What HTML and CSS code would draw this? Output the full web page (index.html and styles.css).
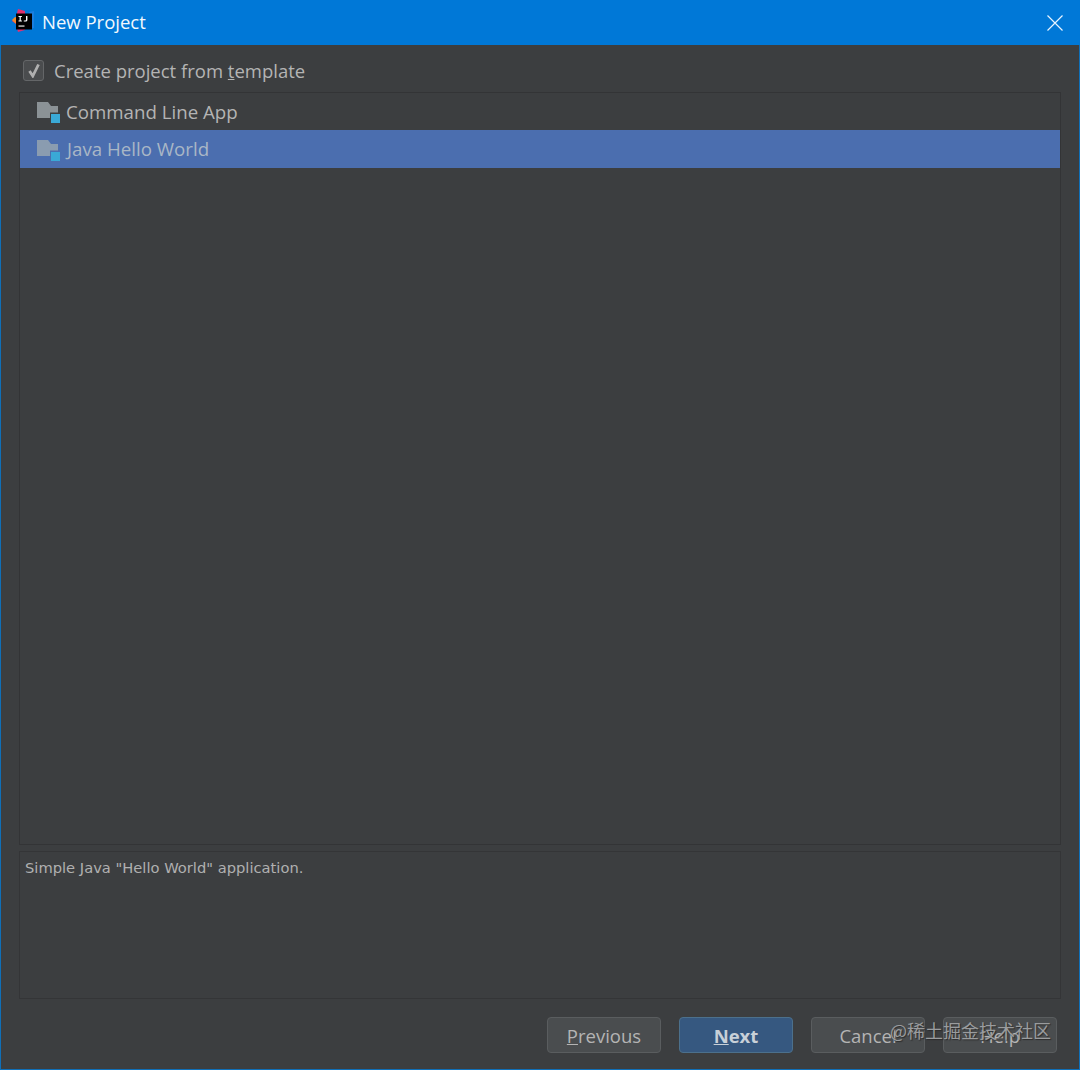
FILE: index.html
```html
<!DOCTYPE html>
<html lang="en">
<head>
<meta charset="utf-8">
<title>New Project</title>
<link rel="stylesheet" href="styles.css">
</head>
<body>
<div class="window">
  <header class="titlebar">
    <svg class="logo" width="26" height="26" viewBox="0 0 26 26">
      <path d="M7 1 L14 3 L14 22 L7 24 L5 16 L1 13 L5 9 Z" fill="#e0306e"/>
      <path d="M1 12 L4 9 L6 10 L6 16 L4 15 Z" fill="#f08a2c"/>
      <path d="M18 4 L23 3 L23 20 L18 21 Z" fill="#1a7fe0"/>
      <rect x="5" y="5.5" width="16" height="16" fill="#000"/>
      <path d="M7.5 8 h3.4 v1 h-1.1 v3.5 h1.1 v1 h-3.4 v-1 h1.1 v-3.5 h-1.1 z M15 8 h1.4 v3.9 q0 1.6 -1.6 1.6 h-2 v-1 h1.6 q.6 0 .6 -.7 z" fill="#fff"/>
      <rect x="7.5" y="17.5" width="6" height="1.1" fill="#fff"/>
    </svg>
    <span class="title">New Project</span>
    <svg class="close" width="16" height="16" viewBox="0 0 16 16">
      <path d="M.5 .5 L15.5 15.5 M15.5 .5 L.5 15.5" stroke="#e8f4ff" stroke-width="1.2" fill="none"/>
    </svg>
  </header>
  <main class="content">
    <label class="template-row">
      <span class="checkbox">
        <svg width="14" height="15" viewBox="0 0 14 15">
          <path d="M2.5 8 L5.8 13 L11.5 1.5" stroke="#b0b0b0" stroke-width="2.8" fill="none"/>
        </svg>
      </span>
      <span>Create project from <u>t</u>emplate</span>
    </label>
    <section class="list">
      <div class="item">
        <svg class="folder" width="24" height="22" viewBox="0 0 24 22">
          <path d="M0 0 H11 L14 4 H21 V10.5 H13 V16 H0 Z" fill="#8b9296"/>
          <rect x="14" y="12" width="9" height="9" fill="#3aa9d6"/>
        </svg>
        <span>Command Line App</span>
      </div>
      <div class="item selected">
        <svg class="folder" width="24" height="22" viewBox="0 0 24 22">
          <path d="M0 0 H11 L14 4 H21 V10.5 H13 V16 H0 Z" fill="#8a9cb0"/>
          <rect x="14" y="12" width="9" height="9" fill="#3aa9d6"/>
        </svg>
        <span>Java Hello World</span>
      </div>
    </section>
    <section class="description">Simple Java "Hello World" application.</section>
    <footer class="buttons">
      <button class="btn"><u>P</u>revious</button>
      <button class="btn primary"><u>N</u>ext</button>
      <button class="btn">Cancel</button>
      <button class="btn">Help</button>
    </footer>
  </main>
  <div class="watermark">@稀土掘金技术社区</div>
</div>
</body>
</html>
```
FILE: styles.css
```css
* { box-sizing: border-box; }
html, body { margin: 0; padding: 0; background: #3c3e40; }
.window {
  position: relative;
  width: 1080px;
  height: 1070px;
  display: flex;
  flex-direction: column;
  border: 1px solid #0f6fb8;
  border-top: 0;
  background: #3c3e40;
  font-family: "Open Sans", "Noto Sans", sans-serif;
  color: #b4b4b4;
}
.titlebar {
  height: 45px;
  margin: 0 -1px;
  padding: 0 17px 0 11px;
  display: flex;
  align-items: center;
  background: #0078d7;
  flex: none;
}
.logo { flex: none; margin-top: -3px; }
.title { margin-left: 5px; margin-top: -2px; font-size: 18.5px; color: #f2f8fd; }
.close { margin-left: auto; }
.content {
  flex: 1;
  display: flex;
  flex-direction: column;
  padding: 15px 18px 15px 18px;
  min-height: 0;
}
.template-row {
  height: 24px;
  padding-left: 4px;
  margin-bottom: 8px;
  display: flex;
  align-items: center;
  gap: 10px;
  font-size: 18.5px;
  flex: none;
}
.template-row > span:last-child { margin-top: -4px; }
.checkbox {
  width: 21px;
  height: 21px;
  margin-top: -3px;
  display: flex;
  align-items: center;
  justify-content: center;
  background: #4a4c4e;
  border: 1px solid #646668;
  border-radius: 3px;
}
.list {
  height: 753px;
  flex: none;
  border: 1px solid #333436;
  padding: 0;
}
.item {
  height: 37px;
  padding-left: 17px;
  display: flex;
  align-items: center;
  gap: 5px;
  font-size: 18.7px;
}
.item.selected { background: #4b6eaf; color: #a9b7c6; height: 38px; }
.item.selected span { margin-top: -2px; margin-left: 1px; }
.folder { flex: none; margin-top: 3px; }
.description {
  height: 148px;
  flex: none;
  margin-top: 6px;
  border: 1px solid #343537;
  padding: 7px 5px;
  font-family: "DejaVu Sans", sans-serif;
  font-size: 14.7px;
  line-height: 18px;
  color: #b0b0b0;
}
.buttons {
  display: flex;
  justify-content: flex-end;
  gap: 18px;
  margin-top: 18px;
  padding-right: 4px;
}
.btn {
  width: 114px;
  height: 36px;
  padding: 0;
  font-family: inherit;
  font-size: 18.5px;
  color: #b4b4b4;
  background: #4a4d4f;
  border: 1px solid #5a5d5f;
  border-radius: 4px;
}
.btn.primary {
  background: #365880;
  border-color: #4c708c;
  color: #c8d0d8;
  font-weight: 700;
}
.watermark {
  position: absolute;
  left: 889px;
  top: 1017px;
  font-family: "Noto Sans CJK SC", sans-serif;
  font-size: 18px;
  color: #9a9c9e;
  text-shadow: 1px 1px 1px #2c2c2c;
}
```
